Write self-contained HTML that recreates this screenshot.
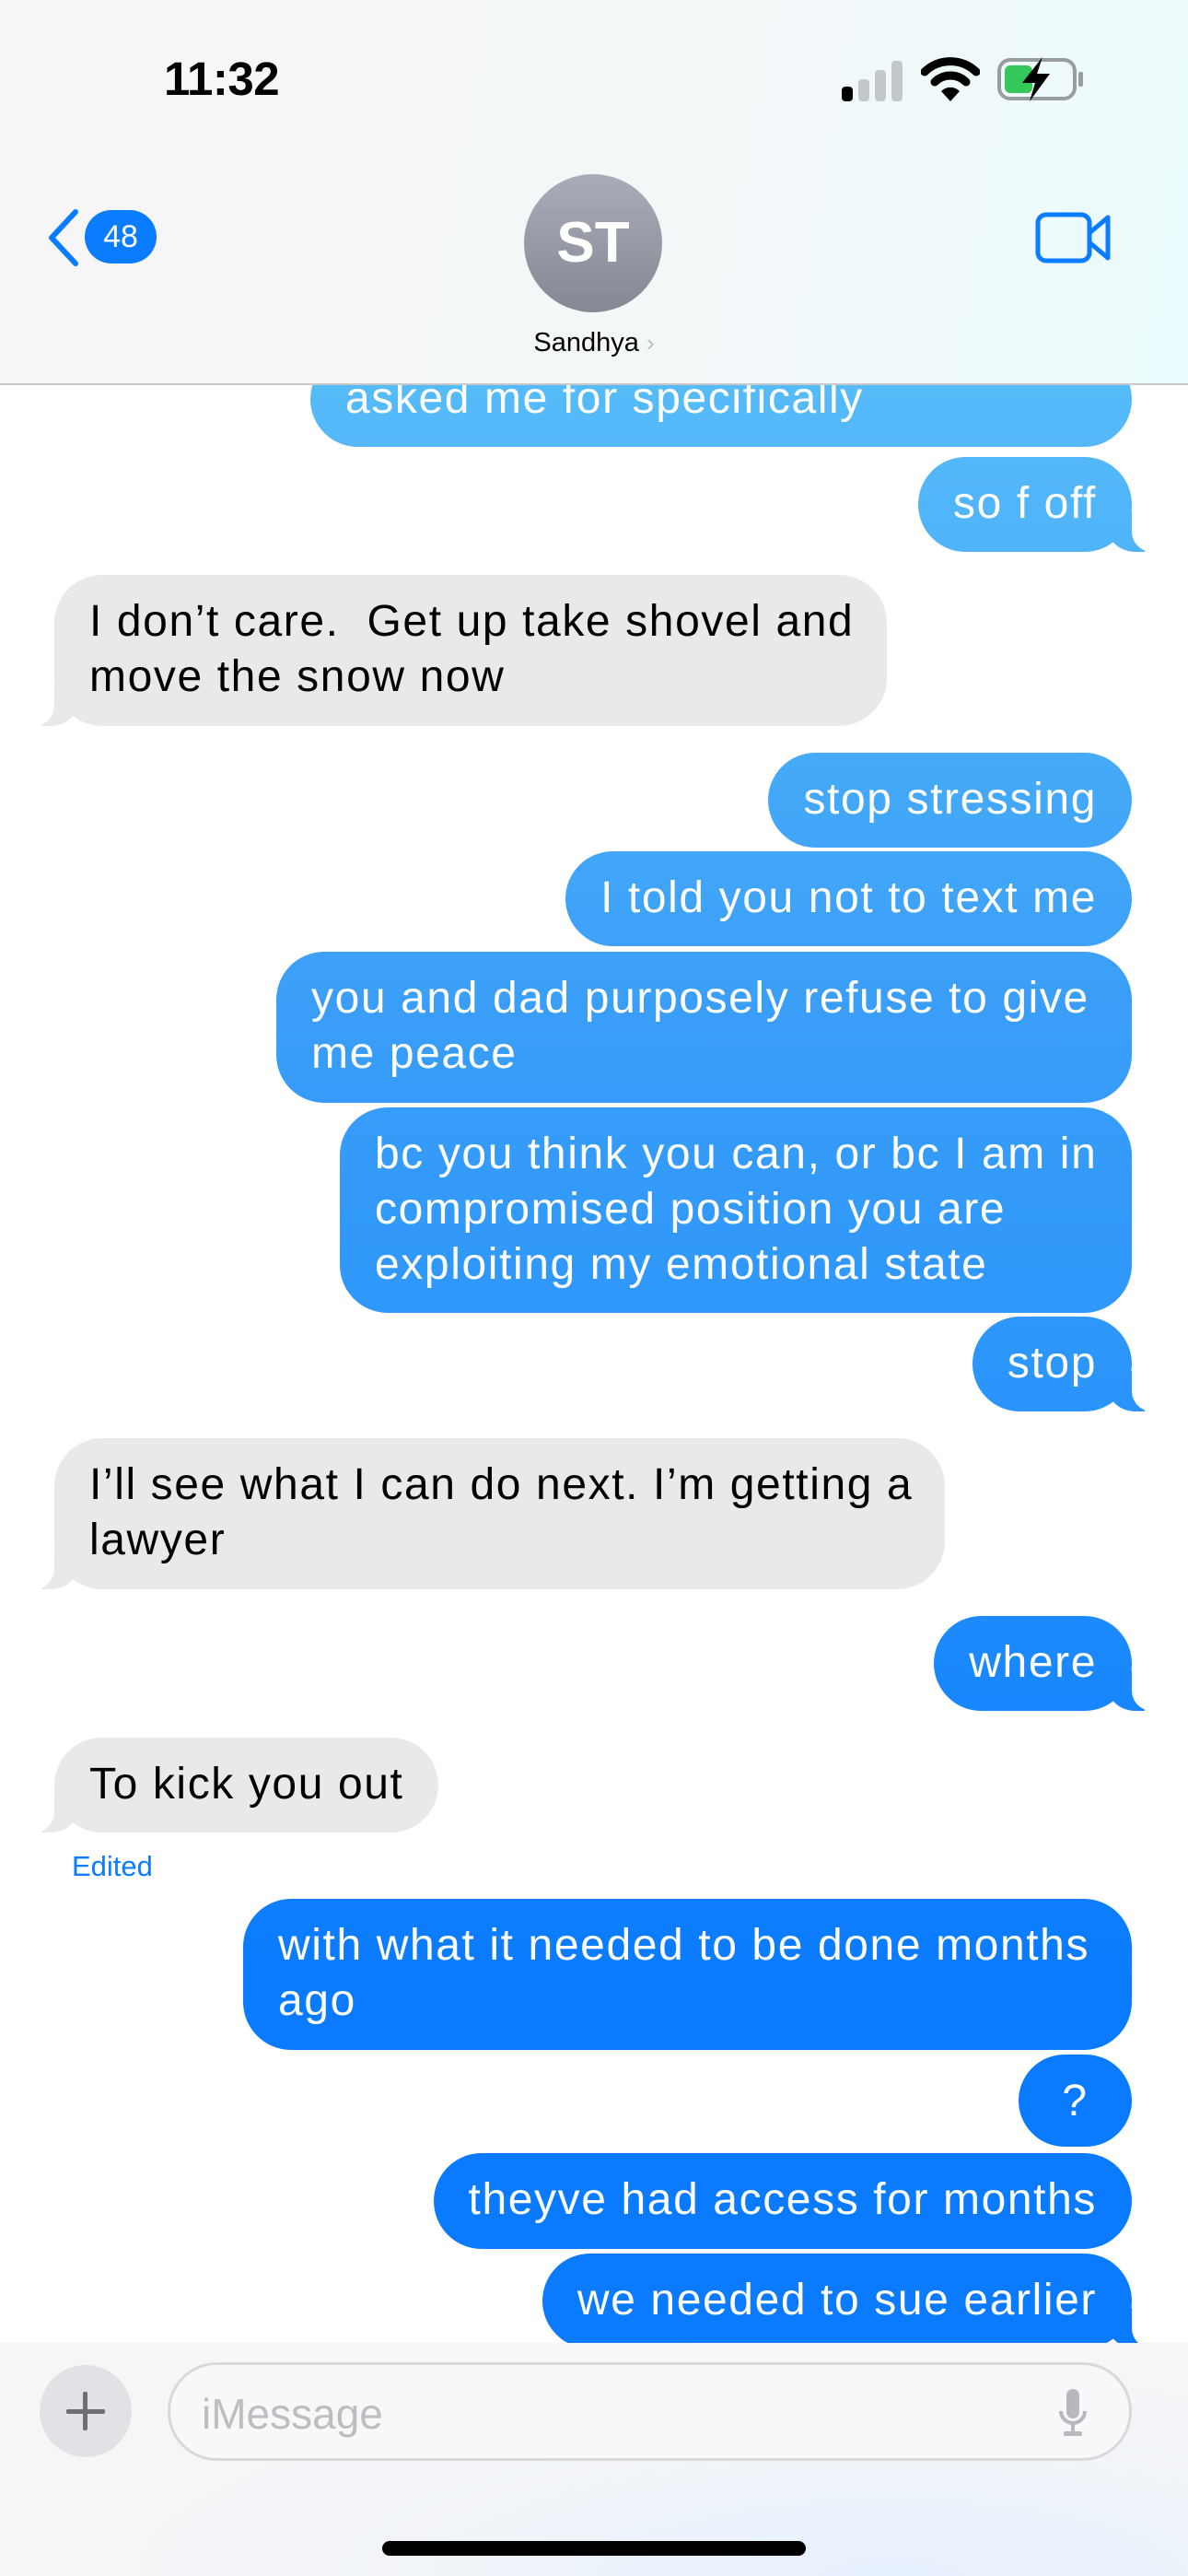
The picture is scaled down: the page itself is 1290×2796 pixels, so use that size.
<!DOCTYPE html>
<html><head><meta charset="utf-8">
<style>
*{margin:0;padding:0;box-sizing:border-box}
html,body{width:1290px;height:2796px;overflow:hidden;background:#fff;font-family:"Liberation Sans",sans-serif}
.hdr{position:absolute;left:0;top:0;width:1290px;height:418px;background:linear-gradient(100deg,#f6f6f6 0%,#f4f7f8 55%,#ebfbfd 100%);border-bottom:2px solid #c9c9cc;z-index:5}
.b{position:absolute;font-size:48px;line-height:60px;padding:21px 38px 0 38px;border-radius:52px;white-space:nowrap;letter-spacing:1.6px}
.s{color:#fff;background:linear-gradient(180deg,#58bdf9 0px,#56bbf9 420px,#3a9ef8 1100px,#2e97fb 1450px,#1585fd 1900px,#0a7bff 2150px,#0a7bff 2796px);background-attachment:fixed}
.r{color:#000;background:#e9e9eb}
.s.t::before{content:"";position:absolute;bottom:0;right:-14px;width:40px;height:44px;background:inherit;background-attachment:fixed;border-bottom-left-radius:30px 26px}
.s.t::after{content:"";position:absolute;bottom:0;right:-34px;width:34px;height:46px;background:#fff;border-bottom-left-radius:22px}
.r.t::before{content:"";position:absolute;bottom:0;left:-14px;width:40px;height:44px;background:#e9e9eb;border-bottom-right-radius:30px 26px}
.r.t::after{content:"";position:absolute;bottom:0;left:-34px;width:34px;height:46px;background:#fff;border-bottom-right-radius:22px}
.bot{position:absolute;left:0;top:2543px;width:1290px;height:253px;background:radial-gradient(ellipse at 75% 100%,#e6f0fd 0%,#f3f5f8 45%,#f6f6f7 80%);z-index:5}
</style></head><body>
<div class="hdr">
  <div style="position:absolute;left:178px;top:56px;font-size:51px;font-weight:bold;letter-spacing:-0.5px">11:32</div>
  <svg style="position:absolute;left:912px;top:64px" width="70" height="46" viewBox="0 0 70 46">
    <rect x="2" y="30" width="12" height="16" rx="4" fill="#000"/>
    <rect x="20" y="22" width="12" height="24" rx="4" fill="#c2c8cc"/>
    <rect x="38" y="12" width="12" height="34" rx="4" fill="#c2c8cc"/>
    <rect x="56" y="2" width="12" height="44" rx="4" fill="#c2c8cc"/>
  </svg>
  <svg style="position:absolute;left:1000px;top:62px" width="64" height="48" viewBox="0 0 64 48">
    <path d="M4 16 A40 40 0 0 1 60 16" fill="none" stroke="#000" stroke-width="9" stroke-linecap="round"/>
    <path d="M15 27 A24 24 0 0 1 49 27" fill="none" stroke="#000" stroke-width="9" stroke-linecap="round"/>
    <path d="M32 48 L22 37 A14 14 0 0 1 42 37 Z" fill="#000"/>
  </svg>
  <svg style="position:absolute;left:1082px;top:62px" width="96" height="48" viewBox="0 0 96 48">
    <rect x="3" y="3" width="82" height="42" rx="12" fill="none" stroke="#9a9d9f" stroke-width="4"/>
    <rect x="89" y="16" width="5" height="16" rx="2" fill="#9a9d9f"/>
    <rect x="9" y="9" width="30" height="30" rx="6" fill="#34c759"/>
    <path d="M50 0 L28 28 L42 28 L36 48 L58 18 L44 18 Z" fill="#000"/>
  </svg>
  <svg style="position:absolute;left:48px;top:226px" width="42" height="64" viewBox="0 0 42 64"><path d="M34 4 L8 32 L34 60" fill="none" stroke="#0a7cff" stroke-width="6" stroke-linecap="round" stroke-linejoin="round"/></svg>
  <div style="position:absolute;left:92px;top:228px;width:78px;height:58px;border-radius:29px;background:#0a7cff;color:#fff;font-size:34px;line-height:58px;text-align:center">48</div>
  <div style="position:absolute;left:569px;top:189px;width:150px;height:150px;border-radius:50%;background:linear-gradient(180deg,#a8adb9,#858892);color:#fff;font-size:62px;font-weight:bold;line-height:150px;text-align:center">ST</div>
  <div style="position:absolute;left:0;width:1290px;top:356px;text-align:center;font-size:29px;color:#000">Sandhya <span style="color:#b8bcc2;font-size:26px">&#8250;</span></div>
  <svg style="position:absolute;left:1124px;top:230px" width="84" height="56" viewBox="0 0 84 56">
    <rect x="3" y="3" width="56" height="50" rx="9" fill="none" stroke="#0a7cff" stroke-width="5"/>
    <path d="M60 22 L79 6 L79 50 L60 34" fill="none" stroke="#0a7cff" stroke-width="5" stroke-linejoin="round"/>
  </svg>
</div>

<div class="b s" style="right:61px;top:382px;height:103px;width:892px">asked me for specifically</div>
<div class="b s t" style="right:61px;top:496px;height:103px">so f off</div>
<div class="b r t" style="left:59px;top:624px;height:164px;width:904px">I don’t care.&nbsp; Get up take shovel and<br>move the snow now</div>
<div class="b s" style="right:61px;top:817px;height:103px">stop stressing</div>
<div class="b s" style="right:61px;top:924px;height:103px">I told you not to text me</div>
<div class="b s" style="right:61px;top:1033px;height:164px;width:929px">you and dad purposely refuse to give<br>me peace</div>
<div class="b s" style="right:61px;top:1202px;height:223px;width:860px">bc you think you can, or bc I am in<br>compromised position you are<br>exploiting my emotional state</div>
<div class="b s t" style="right:61px;top:1429px;height:103px">stop</div>
<div class="b r t" style="left:59px;top:1561px;height:164px;width:967px">I’ll see what I can do next. I’m getting a<br>lawyer</div>
<div class="b s t" style="right:61px;top:1754px;height:103px">where</div>
<div class="b r t" style="left:59px;top:1886px;height:103px">To kick you out</div>
<div style="position:absolute;left:78px;top:2008px;font-size:31px;color:#0a7cff">Edited</div>
<div class="b s" style="right:61px;top:2061px;height:164px;width:965px">with what it needed to be done months<br>ago</div>
<div class="b s" style="right:61px;top:2230px;height:100px;width:123px;text-align:center;padding-left:0;padding-right:0">?</div>
<div class="b s" style="right:61px;top:2337px;height:104px">theyve had access for months</div>
<div class="b s t" style="right:61px;top:2446px;height:103px">we needed to sue earlier</div>

<div class="bot">
  <div style="position:absolute;left:43px;top:24px;width:100px;height:100px;border-radius:50%;background:#e2e2e6"></div>
  <div style="position:absolute;left:72px;top:72px;width:42px;height:5px;background:#6e6e73;border-radius:2px"></div>
  <div style="position:absolute;left:90px;top:53px;width:5px;height:42px;background:#6e6e73;border-radius:2px"></div>
  <div style="position:absolute;left:182px;top:21px;width:1047px;height:107px;border-radius:54px;border:3px solid #d9d9dc;background:rgba(250,250,251,0.7)"></div>
  <div style="position:absolute;left:219px;top:50px;font-size:46px;color:#bdbdc2">iMessage</div>
  <svg style="position:absolute;left:1148px;top:50px" width="34" height="54" viewBox="0 0 34 54">
    <rect x="10" y="0" width="14" height="32" rx="7" fill="#b5b8bd"/>
    <path d="M4 24 A13 13 0 0 0 30 24" fill="none" stroke="#b5b8bd" stroke-width="4"/>
    <rect x="15" y="36" width="4" height="12" fill="#b5b8bd"/>
    <rect x="7" y="46" width="20" height="5" rx="2" fill="#b5b8bd"/>
  </svg>
  <div style="position:absolute;left:415px;top:215px;width:460px;height:16px;border-radius:8px;background:#000"></div>
</div>
</body></html>
